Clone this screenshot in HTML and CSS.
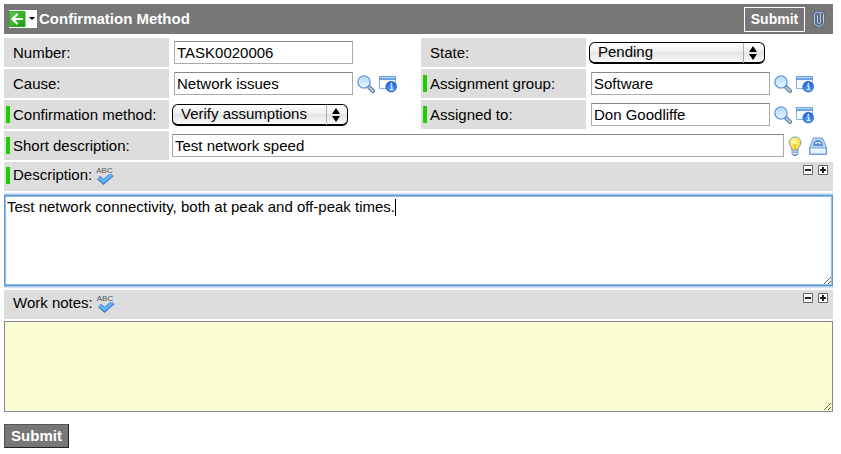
FILE: index.html
```html
<!DOCTYPE html>
<html lang="en">
<head>
<meta charset="utf-8">
<title>Confirmation Method</title>
<link rel="stylesheet" href="styles.css">
</head>
<body>
<svg class="defs" aria-hidden="true">
  <defs>
    <linearGradient id="lens" x1="0" y1="0" x2="0" y2="1"><stop offset="0" stop-color="#a9d4f8"/><stop offset="1" stop-color="#eefaff"/></linearGradient>
    <radialGradient id="ball" cx=".5" cy=".75" r=".7"><stop offset="0" stop-color="#58a8ff"/><stop offset="1" stop-color="#1c5fd0"/></radialGradient>
    <linearGradient id="leaf" x1="0" y1="0" x2="1" y2="1"><stop offset="0" stop-color="#5ccb4a"/><stop offset="1" stop-color="#159a12"/></linearGradient>
    <radialGradient id="glow" cx=".45" cy=".4" r=".6"><stop offset="0" stop-color="#fffbb0"/><stop offset="1" stop-color="#fbd51c"/></radialGradient>
    <symbol id="search" viewBox="0 0 18 18">
      <path d="M11.5 11.5l4.500 4.500" stroke="#58789f" stroke-width="4" stroke-linecap="round"/>
      <path d="M12.5 12.500l3.500 3.500" stroke="#b5cbe2" stroke-width="2" stroke-linecap="round"/>
      <circle cx="7" cy="7" r="6.1" fill="url(#lens)" stroke="#6a9de0" stroke-width="1.5"/>
      <circle cx="7" cy="7" r="4.800" fill="none" stroke="#d8eeff" stroke-width=".8"/>
    </symbol>
    <symbol id="info" viewBox="0 0 18 18">
      <path d="M.5 1.500h16v12H.5z" fill="#f4f9ff" stroke="#84aee4"/>
      <path d="M0 1h17v4H0z" fill="#6fa0e4"/>
      <path d="M1 2.500h15" stroke="#b9d8ff"/>
      <path d="M2 6.500h12v5H2z" fill="#fff"/>
      <circle cx="12.200" cy="11.700" r="5.400" fill="url(#ball)" stroke="#2b69cc" stroke-width=".7"/>
      <path d="M11 10.700h1.700v3.800M10.800 14.500h3.400" fill="none" stroke="#e8f3ff" stroke-width="1.100"/>
      <circle cx="12.400" cy="8.700" r=".9" fill="#fff"/>
    </symbol>
    <symbol id="check" viewBox="0 0 18 11">
      <path d="M2.500 3.500l5 4.500L16 .5" fill="none" stroke="#3c7fd6" stroke-width="4.400"/>
      <path d="M2.800 3.700l4.700 3.800 8-6.800" fill="none" stroke="#69b8ff" stroke-width="2.500"/>
    </symbol>
    <symbol id="minus" viewBox="0 0 10 10"><path d="M.5.5h9v9h-9z" fill="#fff" stroke="#666"/><path d="M2 5h6" stroke="#222" stroke-width="2"/></symbol>
    <symbol id="plus" viewBox="0 0 10 10"><path d="M.5.5h9v9h-9z" fill="#fff" stroke="#666"/><path d="M2 5h6M5 2v6" stroke="#222" stroke-width="2"/></symbol>
  </defs>
</svg>
<form class="form">
  <header class="bar">
    <button type="button" class="back" aria-label="Back">
      <svg width="28" height="18" viewBox="0 0 28 18">
        <path d="M0 0h28v18H0z" fill="#fff"/><path d="M.5 1.500h15.500v15H.5z" fill="url(#leaf)" stroke="#2fae24"/>
        <path d="M14 9H4M8.500 4L3.500 9l5 5" fill="none" stroke="#fff" stroke-width="2.200"/><path d="M20 7h6l-3 3z"/>
      </svg>
    </button>
    <h1 class="title">Confirmation Method</h1>
    <button type="button" class="submit-top">Submit</button>
    <button type="button" class="clip" aria-label="Attachments">
      <svg width="12" height="16" viewBox="0 0 12 16" fill="none">
        <path d="M1.500 11V4a3 3 0 0 1 6 0v7a1.500 1.500 0 0 1-3 0V4.500M7 1.500c2-1 3.500 0 3.500 2V11c0 5.500-9 5.500-9 0" stroke="#425c88" stroke-width="2"/>
        <path d="M1.500 11V4a3 3 0 0 1 6 0v7a1.500 1.500 0 0 1-3 0V4.500M7 1.500c2-1 3.500 0 3.500 2V11c0 5.500-9 5.500-9 0" stroke="#b4cdec"/>
      </svg>
    </button>
  </header>

  <div class="columns">
    <div class="row"><label class="label" for="number">Number:</label><div class="field"><input class="text" id="number" value="TASK0020006"></div></div>
    <div class="row"><label class="label" for="state">State:</label><div class="field choice"><select class="select" id="state"><option>Pending</option></select><svg class="arrows" viewBox="0 0 20 20"><path d="M.5 0v20" stroke="#aaa"/><path d="M6 9l4-6 4 6zM6 11l4 6 4-6z"/></svg></div></div>
    <div class="row"><label class="label" for="cause">Cause:</label><div class="field"><input class="text" id="cause" value="Network issues"><button type="button" class="icon" aria-label="Look up cause"><svg><use href="#search"/></svg></button><button type="button" class="icon" aria-label="Cause details"><svg><use href="#info"/></svg></button></div></div>
    <div class="row"><label class="label required" for="group">Assignment group:</label><div class="field"><input class="text" id="group" value="Software"><button type="button" class="icon" aria-label="Look up group"><svg><use href="#search"/></svg></button><button type="button" class="icon" aria-label="Group details"><svg><use href="#info"/></svg></button></div></div>
    <div class="row"><label class="label required" for="method">Confirmation method:</label><div class="field choice"><select class="select" id="method"><option>Verify assumptions</option></select><svg class="arrows" viewBox="0 0 20 20"><path d="M.5 0v20" stroke="#aaa"/><path d="M6 9l4-6 4 6zM6 11l4 6 4-6z"/></svg></div></div>
    <div class="row"><label class="label required" for="assigned">Assigned to:</label><div class="field"><input class="text" id="assigned" value="Don Goodliffe"><button type="button" class="icon" aria-label="Look up person"><svg><use href="#search"/></svg></button><button type="button" class="icon" aria-label="Person details"><svg><use href="#info"/></svg></button></div></div>
  </div>

  <div class="row wide">
    <label class="label required" for="short">Short description:</label>
    <div class="field">
      <input class="text" id="short" value="Test network speed">
      <button type="button" class="icon bulb" aria-label="Suggestions"><svg viewBox="0 0 14 20">
        <path d="M4 12h6v6l-1.500 1.500h-3L4 18z" fill="#8faedb" stroke="#4f78b8" stroke-width=".8"/><path d="M4 15h6M4 17.500h6" stroke="#e6f0ff" stroke-width=".8"/>
        <path d="M7 1C3.500 1 1 3.500 1 6.500c0 3 3 4 3 7.500h6c0-3.500 3-4.500 3-7.500C13 3.500 10.500 1 7 1z" fill="url(#glow)" stroke="#6f9fdc"/>
        <path d="M5.500 8l1.500 2 1.500-2M7 10v4" fill="none" stroke="#e3a900" stroke-width=".8"/>
      </svg></button>
      <button type="button" class="icon" aria-label="Related items"><svg viewBox="0 0 18 18">
        <path d="M4.500 1h9l4 9.500v7H.5v-7z" fill="#b4d3f6" stroke="#6b9cd8"/><path d="M1 11h16v6H1z" fill="#e4f2ff" stroke="#78a5dc"/>
        <path d="M5 8a4 4 0 0 1 8 0z" fill="#d7eaff" stroke="#4a7cc4" stroke-width="1.300"/><circle cx="9" cy="6.800" r=".9" fill="#3e70b8"/><path d="M2 12.500h14" stroke="#fff"/>
      </svg></button>
    </div>
  </div>

  <div class="section">
    <label class="label required" for="description">Description:</label>
    <button type="button" class="spell" aria-label="Check spelling of description"><span>ABC</span><svg><use href="#check"/></svg></button>
    <div class="sizers"><button type="button" aria-label="Shrink description"><svg><use href="#minus"/></svg></button><button type="button" aria-label="Grow description"><svg><use href="#plus"/></svg></button></div>
  </div>
  <div class="editor active">
    <textarea class="area" id="description">Test network connectivity, both at peak and off-peak times.</textarea>
    <i class="caret" aria-hidden="true"></i>
  </div>

  <div class="section">
    <label class="label" for="notes">Work notes:</label>
    <button type="button" class="spell" aria-label="Check spelling of work notes"><span>ABC</span><svg><use href="#check"/></svg></button>
    <div class="sizers"><button type="button" aria-label="Shrink work notes"><svg><use href="#minus"/></svg></button><button type="button" aria-label="Grow work notes"><svg><use href="#plus"/></svg></button></div>
  </div>
  <div class="editor"><textarea class="area notes" id="notes"></textarea></div>
  <button type="button" class="submit">Submit</button>
</form>
</body>
</html>
```
FILE: styles.css
```css
* { box-sizing: border-box; }
body { margin: 4px 8px 4px 4px; background: #fff; color: #000; font: 15px/18px "Liberation Sans", Arial, sans-serif; }
button, input, select, textarea { margin: 0; font: inherit; color: inherit; }
button { padding: 0; border: 0; background: none; }
svg { display: block; }
.defs { position: absolute; width: 0; height: 0; }
.bar { display: flex; align-items: center; height: 30px; padding: 0 8px 0 5px; margin-bottom: 4px; background: #777; color: #fff; }
.title { flex: 1; margin: 0 0 0 2px; font-size: 15px; line-height: 18px; }
.submit-top { width: 61px; height: 25px; border: 1px solid #fff; font-size: 14px; font-weight: bold; }
.clip { margin-left: 8px; }
.columns { display: grid; grid-template-columns: 1fr 1fr; gap: 2px 5px; }
.row { display: flex; min-width: 0; }
.label { flex: none; display: flex; align-items: center; width: 165px; height: 29px; padding-left: 9px; background: #ddd; white-space: nowrap; }
.required { padding-left: 2px; }
.required::before { content: ""; width: 4px; height: 17px; margin-right: 3px; background: #1fcc00; }
.field { display: flex; flex: 1; align-items: center; min-width: 0; padding-left: 5px; }
.text { width: 179px; height: 23px; padding: 0 2px; border: 1px solid #aaa; border-top-color: #888; background: #fff; }
.choice { padding-left: 3px; }
.select { width: 176px; height: 22px; padding: 0 24px 0 8px; appearance: none; border: 1px solid #000; border-bottom-width: 2px; border-radius: 6px; background: linear-gradient(#fff, #efefef 45%, #e4e4e4 50%, #fafafa); }
.arrows { width: 20px; height: 20px; margin-left: -22px; pointer-events: none; }
.icon { flex: none; margin-left: 4px; }
.icon svg { width: 18px; height: 18px; }
.wide { margin-top: 2px; }
.wide .field { padding: 0 6px 0 3px; }
.wide .text { flex: 1; min-width: 0; }
.bulb svg { width: 14px; height: 20px; }
.bulb + .icon { margin-left: 7px; }
.section { display: flex; align-items: flex-start; height: 29px; margin-top: 2px; background: #ddd; }
.section .label { width: auto; height: 26px; }
.spell { width: 18px; margin: 5px 0 0 4px; color: #555; font-size: 8px; line-height: 7px; text-align: left; }
.spell span { display: block; }
.spell svg { width: 18px; height: 11px; }
.sizers { display: flex; gap: 5px; margin: 3px 5px 0 auto; }
.sizers svg { width: 10px; height: 10px; }
.editor { position: relative; margin: 2px 0 4px; }
.editor.active { margin-top: 4px; }
.area { display: block; width: 100%; height: 91px; padding: 2px; border: 1px solid #888; resize: vertical; outline: 0; }
.active .area { border-color: #5f96d0; box-shadow: 0 0 2px 1px #7eb0e4, inset 0 0 1px 1px #8db8e6; }
.notes { background: #fafcd2; }
.caret { position: absolute; top: 4px; left: 391px; width: 1px; height: 17px; background: #000; pointer-events: none; }
.submit { width: 65px; height: 24px; margin-top: 8px; border: 1px solid #555; border-right-color: #222; border-bottom-color: #222; background: #777; color: #fff; font-weight: bold; }
```
